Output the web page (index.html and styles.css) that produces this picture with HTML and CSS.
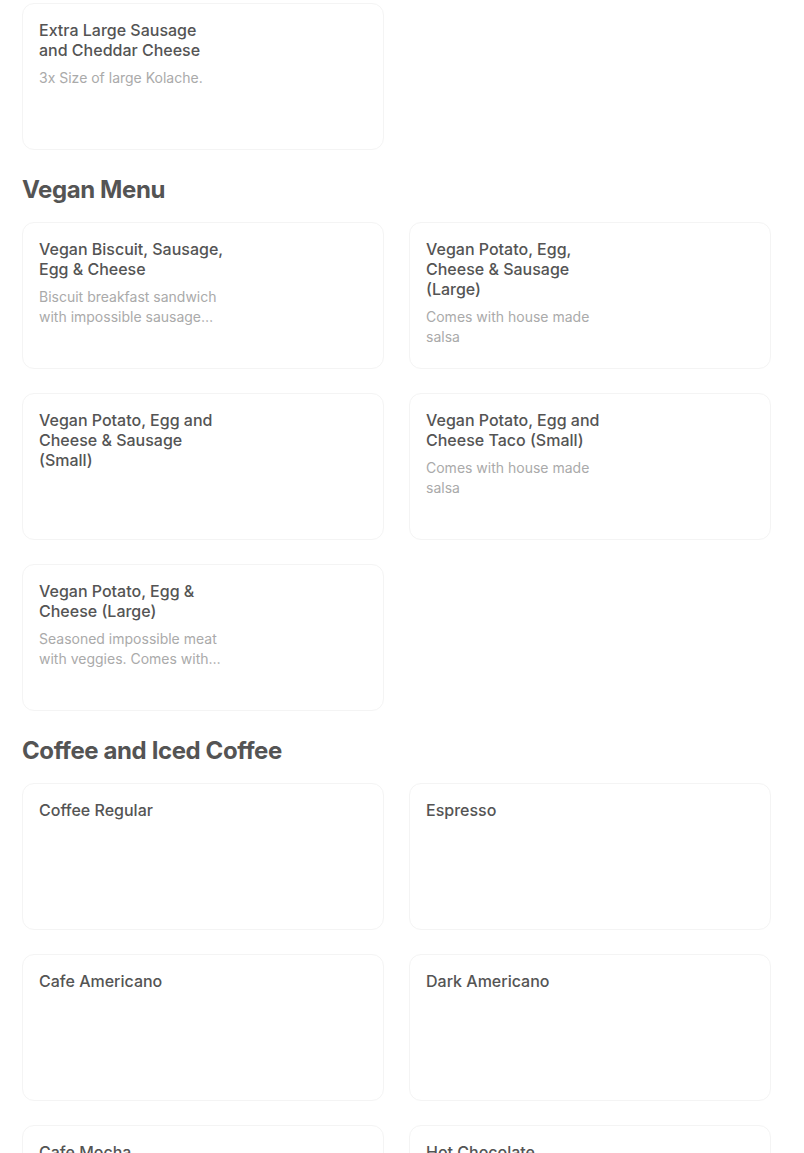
FILE: index.html
```html
<!DOCTYPE html>
<html lang="en">
<head>
  <meta charset="UTF-8">
  <meta name="viewport" content="width=device-width, initial-scale=1.0">
  <title>Menu</title>
  <link rel="stylesheet" href="styles.css">
</head>
<body>
  <div class="menu">
    <section class="menu-section first">
      <div class="item-grid">
        <div class="item-card">
          <div class="item-info">
            <h3 class="item-title">Extra Large Sausage and Cheddar Cheese</h3>
            <p class="item-desc">3x Size of large Kolache.</p>
          </div>
        </div>
      </div>
    </section>

    <section class="menu-section">
      <h2 class="section-title">Vegan Menu</h2>
      <div class="item-grid">
        <div class="item-card">
          <div class="item-info">
            <h3 class="item-title">Vegan Biscuit, Sausage, Egg &amp; Cheese</h3>
            <p class="item-desc">Biscuit breakfast sandwich with impossible sausage patty, egg and cheese</p>
          </div>
        </div>
        <div class="item-card">
          <div class="item-info">
            <h3 class="item-title">Vegan Potato, Egg, Cheese &amp; Sausage (Large)</h3>
            <p class="item-desc">Comes with house made salsa</p>
          </div>
        </div>
        <div class="item-card">
          <div class="item-info">
            <h3 class="item-title">Vegan Potato, Egg and Cheese &amp; Sausage (Small)</h3>
          </div>
        </div>
        <div class="item-card">
          <div class="item-info">
            <h3 class="item-title">Vegan Potato, Egg and Cheese Taco (Small)</h3>
            <p class="item-desc">Comes with house made salsa</p>
          </div>
        </div>
        <div class="item-card">
          <div class="item-info">
            <h3 class="item-title">Vegan Potato, Egg &amp; Cheese (Large)</h3>
            <p class="item-desc">Seasoned impossible meat with veggies. Comes with house made salsa</p>
          </div>
        </div>
      </div>
    </section>

    <section class="menu-section">
      <h2 class="section-title">Coffee and Iced Coffee</h2>
      <div class="item-grid">
        <div class="item-card">
          <div class="item-info">
            <h3 class="item-title">Coffee Regular</h3>
          </div>
        </div>
        <div class="item-card">
          <div class="item-info">
            <h3 class="item-title">Espresso</h3>
          </div>
        </div>
        <div class="item-card">
          <div class="item-info">
            <h3 class="item-title">Cafe Americano</h3>
          </div>
        </div>
        <div class="item-card">
          <div class="item-info">
            <h3 class="item-title">Dark Americano</h3>
          </div>
        </div>
        <div class="item-card">
          <div class="item-info">
            <h3 class="item-title">Cafe Mocha</h3>
          </div>
        </div>
        <div class="item-card">
          <div class="item-info">
            <h3 class="item-title">Hot Chocolate</h3>
          </div>
        </div>
      </div>
    </section>
  </div>
</body>
</html>
```

FILE: styles.css
```css
body {
  font-family: Inter, "Noto Sans", sans-serif;
  background-color: #ffffff;
  color: #545454;
  margin: 0;
  padding: 0;
}

.menu {
  padding: 3px 32px 0 22px;
}

.menu-section {
  margin-top: 24px;
}

.menu-section.first {
  margin-top: 0;
}

.section-title {
  margin: 0 0 16px;
  font-size: 24px;
  line-height: 32px;
  font-weight: 700;
  letter-spacing: -0.4px;
  color: #545454;
}

.item-grid {
  display: grid;
  grid-template-columns: 362px 362px;
  column-gap: 25px;
  row-gap: 24px;
}

.item-card {
  box-sizing: border-box;
  height: 147px;
  padding: 16px;
  border: 1px solid #f4f4f4;
  border-radius: 12px;
}

.item-info {
  width: 186px;
}

.item-title {
  margin: 0;
  font-size: 16px;
  line-height: 20px;
  font-weight: 500;
  color: #545454;
}

.item-desc {
  margin: 8px 0 0;
  font-size: 14px;
  line-height: 20px;
  color: #aaaaaa;
  display: -webkit-box;
  -webkit-line-clamp: 2;
  -webkit-box-orient: vertical;
  overflow: hidden;
}
```
